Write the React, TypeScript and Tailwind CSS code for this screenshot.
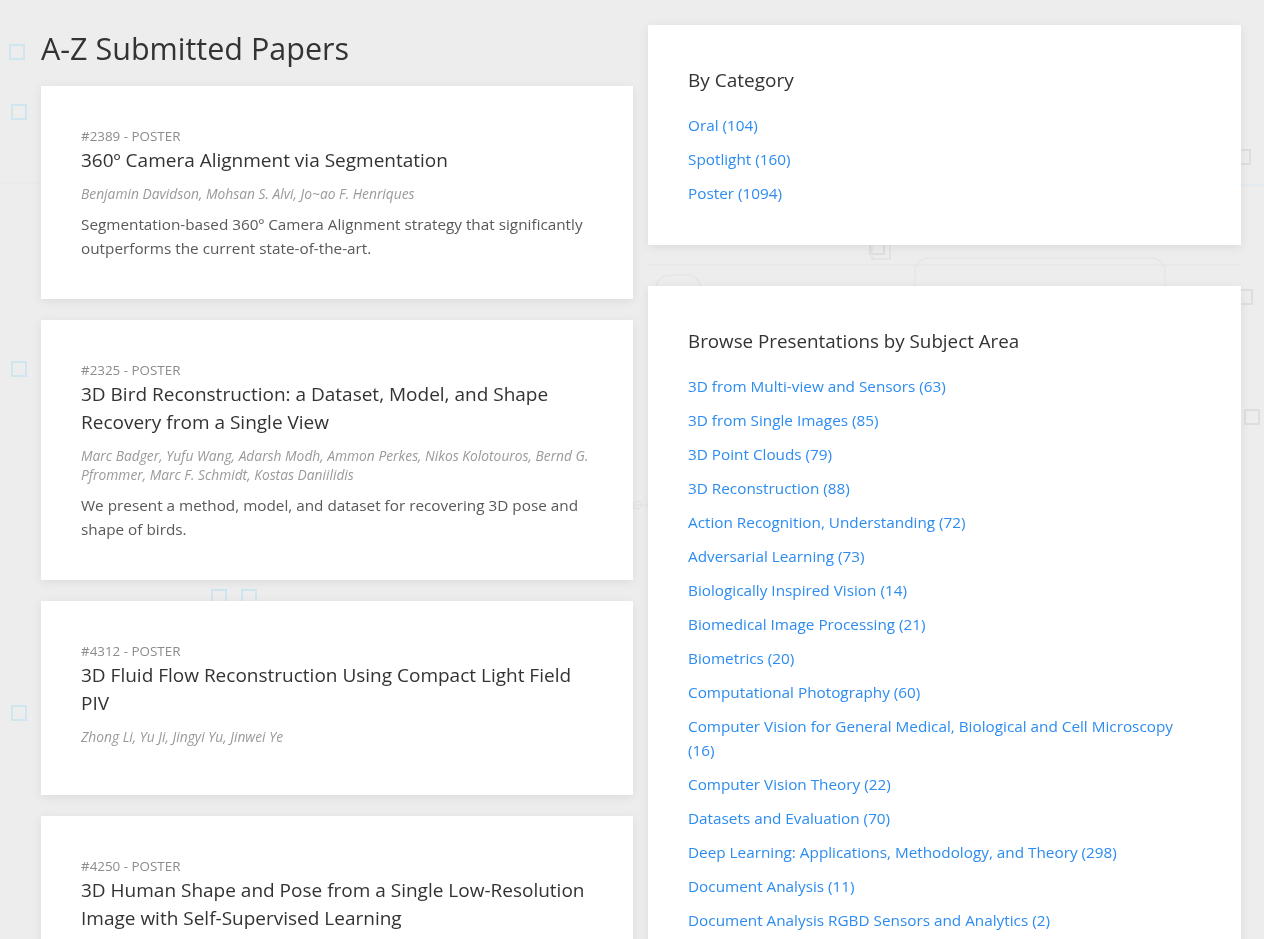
const papers = [
  {
    meta: "#2389 - POSTER",
    title: "360º Camera Alignment via Segmentation",
    authors: "Benjamin Davidson, Mohsan S. Alvi, Jo~ao F. Henriques",
    abstract: "Segmentation-based 360º Camera Alignment strategy that significantly outperforms the current state-of-the-art.",
  },
  {
    meta: "#2325 - POSTER",
    title: "3D Bird Reconstruction: a Dataset, Model, and Shape Recovery from a Single View",
    authors: "Marc Badger, Yufu Wang, Adarsh Modh, Ammon Perkes, Nikos Kolotouros, Bernd G. Pfrommer, Marc F. Schmidt, Kostas Daniilidis",
    abstract: "We present a method, model, and dataset for recovering 3D pose and shape of birds.",
  },
  {
    meta: "#4312 - POSTER",
    title: "3D Fluid Flow Reconstruction Using Compact Light Field PIV",
    authors: "Zhong Li, Yu Ji, Jingyi Yu, Jinwei Ye",
    abstract: "",
  },
  {
    meta: "#4250 - POSTER",
    title: "3D Human Shape and Pose from a Single Low-Resolution Image with Self-Supervised Learning",
    authors: "",
    abstract: "",
  },
];

const categories = ["Oral (104)", "Spotlight (160)", "Poster (1094)"];

const subjects = [
  "3D from Multi-view and Sensors (63)",
  "3D from Single Images (85)",
  "3D Point Clouds (79)",
  "3D Reconstruction (88)",
  "Action Recognition, Understanding (72)",
  "Adversarial Learning (73)",
  "Biologically Inspired Vision (14)",
  "Biomedical Image Processing (21)",
  "Biometrics (20)",
  "Computational Photography (60)",
  "Computer Vision for General Medical, Biological and Cell Microscopy (16)",
  "Computer Vision Theory (22)",
  "Datasets and Evaluation (70)",
  "Deep Learning: Applications, Methodology, and Theory (298)",
  "Document Analysis (11)",
  "Document Analysis RGBD Sensors and Analytics (2)",
];

function Background() {
  const sq = [
    [10, 45], [12, 105], [12, 362], [12, 706], [212, 590], [242, 590], [1236, 150], [1238, 290], [1245, 410], [870, 240],
  ];
  return (
    <svg className="pointer-events-none fixed inset-0 h-full w-full" width="1264" height="939">
      {sq.map(([x, y], i) => (
        <rect key={i} x={x} y={y} width="14" height="14" fill="none" stroke={i < 6 ? "#cfe6f1" : "#dedede"} strokeWidth="2" />
      ))}
      <line x1="648" y1="265" x2="1241" y2="265" stroke="#e2e2e2" strokeWidth="1" />
      <rect x="872" y="243" width="18" height="16" fill="none" stroke="#e4e4e4" strokeWidth="2" />
      <rect x="915" y="258" width="250" height="60" rx="14" fill="none" stroke="#e6e6e6" strokeWidth="1.5" />
      <rect x="656" y="275" width="45" height="30" rx="14" fill="none" stroke="#e6e6e6" strokeWidth="1.5" />
      <line x1="0" y1="183" x2="40" y2="183" stroke="#e8e8e8" strokeWidth="1" />
      <line x1="1241" y1="185" x2="1264" y2="185" stroke="#d8e8f2" strokeWidth="1" />
      <line x1="633" y1="505" x2="648" y2="505" stroke="#e2e2e2" strokeWidth="1" />
      <circle cx="637" cy="505" r="4" fill="none" stroke="#e2e2e2" strokeWidth="1" />
    </svg>
  );
}

export default function App() {
  return (
    <div
      className="relative h-[939px] overflow-hidden bg-[#ededed] text-[#333]"
      style={{ fontFamily: '"Open Sans", "Noto Sans", sans-serif' }}
    >
      <Background />
      <div className="relative flex gap-[15px] pl-[41px] pr-[23px] pt-[25px]">
        <div className="w-[592px] shrink-0">
          <h1 className="mb-[15px] text-[30.5px] leading-[46px] text-[#333]">A-Z Submitted Papers</h1>
          <div className="flex flex-col gap-[21px]">
            {papers.map((p) => (
              <div key={p.meta} className="bg-white px-[40px] pb-[39px] pt-[40px] shadow-[0_2px_10px_rgba(0,0,0,0.08)]">
                <div className="text-[13.4px] leading-[20px] text-[#8c8c8c]">{p.meta}</div>
                <div className="text-[19px] leading-[28px] text-[#333]">{p.title}</div>
                {p.authors && (
                  <div className="mt-[10px] text-[13.8px] italic leading-[19px] text-[#9a9a9a]">{p.authors}</div>
                )}
                {p.abstract ? (
                  <div className="mt-[9px] text-[15.3px] leading-[24px] text-[#595959]">{p.abstract}</div>
                ) : (
                  <div className="h-[10px]" />
                )}
              </div>
            ))}
          </div>
        </div>
        <div className="w-[593px] shrink-0 flex flex-col gap-[41px]">
          <div className="bg-white px-[40px] py-[40px] shadow-[0_2px_10px_rgba(0,0,0,0.08)]">
            <h2 className="text-[19px] leading-[30px] text-[#333]">By Category</h2>
            <ul className="mt-[18px] flex flex-col gap-[10px]">
              {categories.map((c) => (
                <li key={c} className="text-[15.3px] leading-[24px] text-[#2d8cf0]">{c}</li>
              ))}
            </ul>
          </div>
          <div className="bg-white px-[40px] py-[40px] shadow-[0_2px_10px_rgba(0,0,0,0.08)]">
            <h2 className="text-[18.8px] leading-[30px] text-[#333]">Browse Presentations by Subject Area</h2>
            <ul className="mt-[18px] flex max-w-[500px] flex-col gap-[10px]">
              {subjects.map((c) => (
                <li key={c} className="text-[15.3px] leading-[24px] text-[#2d8cf0]">{c}</li>
              ))}
            </ul>
          </div>
        </div>
      </div>
    </div>
  );
}
